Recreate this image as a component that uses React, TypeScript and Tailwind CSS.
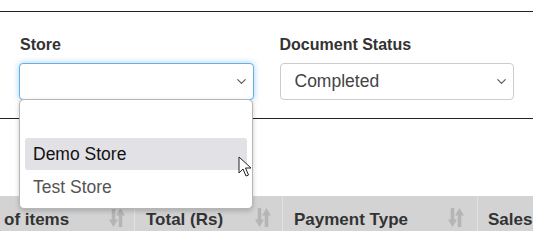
import { ChevronDown } from "lucide-react";

const SortIcon = () => (
  <svg width="16" height="19" viewBox="0 0 16 19" className="mt-[12px] self-start text-[#b5b5b5]">
    {/* down arrow */}
    <path d="M4.5 0v13" stroke="currentColor" strokeWidth="3.6" />
    <path d="M0 11.5l4.5 7.5 4.5-7.5z" fill="currentColor" />
    {/* up arrow */}
    <path d="M11.5 19V6" stroke="currentColor" strokeWidth="3.6" />
    <path d="M7 7.5L11.5 0l4.5 7.5z" fill="currentColor" />
  </svg>
);

const HEADERS = [
  { title: "of items", width: "w-[135px]", pad: "pl-[4px] pr-[9px]" },
  { title: "Total (Rs)", width: "w-[148px]", pad: "pl-[11px] pr-[11px]" },
  { title: "Payment Type", width: "w-[195px]", pad: "pl-[11px] pr-[13px]" },
  { title: "Sales", width: "flex-1", pad: "pl-[10px]" },
];

export default function App() {
  return (
    <div className="relative h-[231px] w-[533px] overflow-hidden bg-white font-[family-name:'Liberation_Sans',Arial,sans-serif] text-[#333]">
      <div className="h-[12px] border-b border-[#222]" />

      {/* Filters */}
      <div className="flex gap-[26px] px-[19px] pt-[24px] pb-[18px] border-b border-[#222]">
        <div className="flex w-[235px] flex-col">
          <label className="mb-[9px] pl-[1px] text-[16px] font-bold leading-[18px]">Store</label>
          <div className="flex h-[37px] items-center justify-end rounded-[4px] border border-[#66afe9] bg-white pr-[4px] shadow-[0_0_6px_rgba(102,175,233,0.6)]">
            <ChevronDown size={15} strokeWidth={1.8} className="text-[#555]" />
          </div>
        </div>
        <div className="flex w-[235px] flex-col">
          <label className="mb-[9px] text-[16px] font-bold leading-[18px]">Document Status</label>
          <div className="flex h-[37px] items-center justify-between rounded-[4px] border border-[#ccc] bg-white pl-[14px] pr-[4px]">
            <span className="text-[17.5px] text-[#444]">Completed</span>
            <ChevronDown size={15} strokeWidth={1.8} className="text-[#555]" />
          </div>
        </div>
      </div>

      <div className="h-[77px]" />

      {/* Table header */}
      <div className="flex h-[48px] bg-[#d3d3d3] text-[17px] font-bold text-[#333]">
        {HEADERS.map((h, i) => (
          <div
            key={h.title}
            className={`${h.width} ${h.pad} flex shrink-0 items-center justify-between ${i < HEADERS.length - 1 ? "border-r border-[#e2e2e2]" : ""}`}
          >
            <span>{h.title}</span>
            {i < HEADERS.length - 1 && <SortIcon />}
          </div>
        ))}
      </div>

      {/* Open dropdown */}
      <div className="absolute left-[19px] top-[99px] w-[234px] rounded-[5px] border border-[#b5b5b5] bg-white px-[5px] py-[6px] text-[17.5px] shadow-[0_2px_5px_rgba(0,0,0,0.2)]">
        <div className="h-[32px]" />
        <div className="flex h-[32px] items-center rounded-[3px] bg-[#e1e1e6] pl-[8px] text-[#111]">Demo Store</div>
        <div className="flex h-[32px] items-center pl-[8px] pt-[2px] text-[#555]">Test Store</div>
      </div>

      {/* Mouse cursor */}
      <svg className="absolute left-[238px] top-[156px]" width="14" height="21" viewBox="0 0 14 21">
        <path d="M1 1v16l4-4 3 7 2.5-1-3-7H13z" fill="white" stroke="#222" strokeWidth="1" strokeLinejoin="round" />
      </svg>
    </div>
  );
}
